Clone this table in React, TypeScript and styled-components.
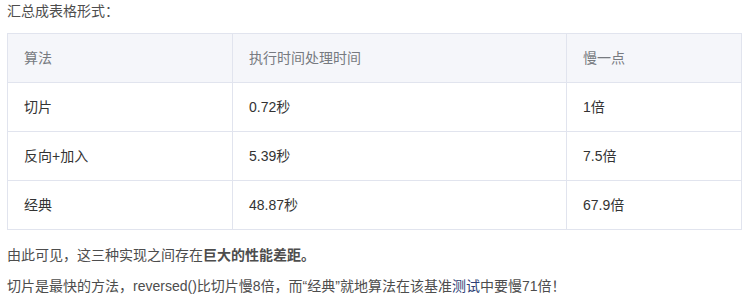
import React from 'react';
import styled, { createGlobalStyle } from 'styled-components';

const GlobalStyle = createGlobalStyle`
  html, body {
    margin: 0;
    padding: 0;
    background: #fff;
  }
  body {
    font-family: "Liberation Sans", "Noto Sans CJK SC", sans-serif;
    font-size: 14px;
    color: #4d4d4d;
  }
`;

const Article = styled.div`
  padding: 0 5px 0 7px;
`;

const Para = styled.p<{ $gap?: number }>`
  margin: 0 0 ${(p) => p.$gap ?? 9}px;
  line-height: 22px;
  color: #4d4d4d;
`;

const Table = styled.table`
  width: 734px;
  border-collapse: collapse;
  table-layout: fixed;
  margin: 0 0 14px;
  border: 1px solid #e1e4ee;
`;

const Th = styled.th`
  background: #f5f6fa;
  color: #777a80;
  font-weight: normal;
  text-align: left;
  padding: 13px 16px;
  line-height: 22px;
  border: 1px solid #e1e4ee;
`;

const Td = styled.td`
  color: #333;
  padding: 13px 16px;
  line-height: 22px;
  border: 1px solid #e1e4ee;
`;

const Link = styled.a`
  color: #2c3e75;
  text-decoration: none;
`;

const rows = [
  ['切片', '0.72秒', '1倍'],
  ['反向+加入', '5.39秒', '7.5倍'],
  ['经典', '48.87秒', '67.9倍'],
];

export default function App() {
  return (
    <Article>
      <GlobalStyle />
      <Para $gap={11}>汇总成表格形式：</Para>
      <Table>
        <colgroup>
          <col style={{ width: 225 }} />
          <col style={{ width: 334 }} />
          <col style={{ width: 175 }} />
        </colgroup>
        <thead>
          <tr>
            <Th>算法</Th>
            <Th>执行时间处理时间</Th>
            <Th>慢一点</Th>
          </tr>
        </thead>
        <tbody>
          {rows.map((r) => (
            <tr key={r[0]}>
              {r.map((c) => (
                <Td key={c}>{c}</Td>
              ))}
            </tr>
          ))}
        </tbody>
      </Table>
      <Para>
        由此可见，这三种实现之间存在<strong>巨大的性能差距。</strong>
      </Para>
      <Para>
        切片是最快的方法，reversed()比切片慢8倍，而“经典”就地算法在该基准<Link href="#">测试</Link>中要慢71倍！
      </Para>
    </Article>
  );
}
